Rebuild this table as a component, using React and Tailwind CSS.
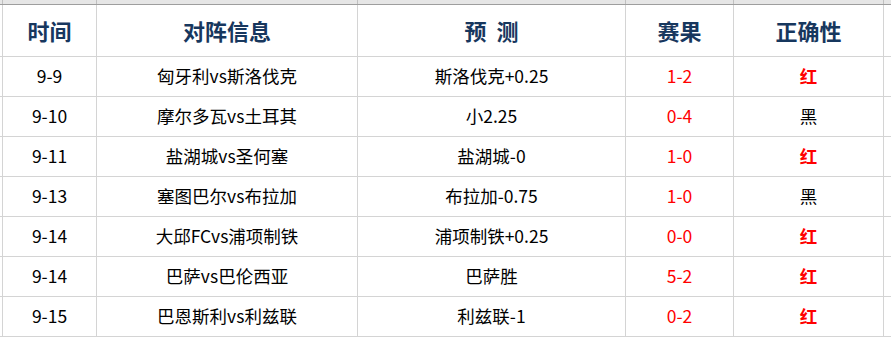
const rows = [
  ["9-9", "匈牙利vs斯洛伐克", "斯洛伐克+0.25", "1-2", "红"],
  ["9-10", "摩尔多瓦vs土耳其", "小2.25", "0-4", "黑"],
  ["9-11", "盐湖城vs圣何塞", "盐湖城-0", "1-0", "红"],
  ["9-13", "塞图巴尔vs布拉加", "布拉加-0.75", "1-0", "黑"],
  ["9-14", "大邱FCvs浦项制铁", "浦项制铁+0.25", "0-0", "红"],
  ["9-14", "巴萨vs巴伦西亚", "巴萨胜", "5-2", "红"],
  ["9-15", "巴恩斯利vs利兹联", "利兹联-1", "0-2", "红"],
];

const widths = ["w-[94px]", "w-[261px]", "w-[268px]", "w-[108px]", "w-[150px]"];

function Cell({ i, children, className = "" }) {
  return (
    <div className={`${widths[i]} shrink-0 border-r border-[#d4d4d4] flex items-center justify-center ${className}`}>
      {children}
    </div>
  );
}

export default function App() {
  return (
    <div className="w-[891px] h-[342px] overflow-hidden bg-white font-['Noto_Sans_CJK_SC','Noto_Sans',sans-serif]">
      <div className="h-[5px] bg-[#e6e6e6] border-b border-[#9e9e9e] flex pl-[2px]">
        <div className="border-l border-[#c0c0c0]" />
        {widths.map((w, i) => (
          <div key={i} className={`${w} shrink-0 border-r border-[#c0c0c0]`} />
        ))}
      </div>
      <div className="h-[52px] border-b border-[#d4d4d4] flex pl-[2px]">
        <div className="border-l border-[#d4d4d4]" />
        {["时间", "对阵信息", "预\u00a0\u00a0测", "赛果", "正确性"].map((t, i) => (
          <Cell key={i} i={i} className="text-[22px] font-bold text-[#17375e]">
            {t}
          </Cell>
        ))}
      </div>
      {rows.map((r, k) => (
        <div key={k} className="h-[40px] border-b border-[#d4d4d4] flex pl-[2px] text-[17.5px] text-black">
          <div className="border-l border-[#d4d4d4]" />
          <Cell i={0}>{r[0]}</Cell>
          <Cell i={1}>{r[1]}</Cell>
          <Cell i={2}>{r[2]}</Cell>
          <Cell i={3} className="text-[#ff0000]">{r[3]}</Cell>
          <Cell i={4} className={r[4] === "红" ? "text-[#ff0000] font-bold" : ""}>
            {r[4]}
          </Cell>
        </div>
      ))}
    </div>
  );
}
